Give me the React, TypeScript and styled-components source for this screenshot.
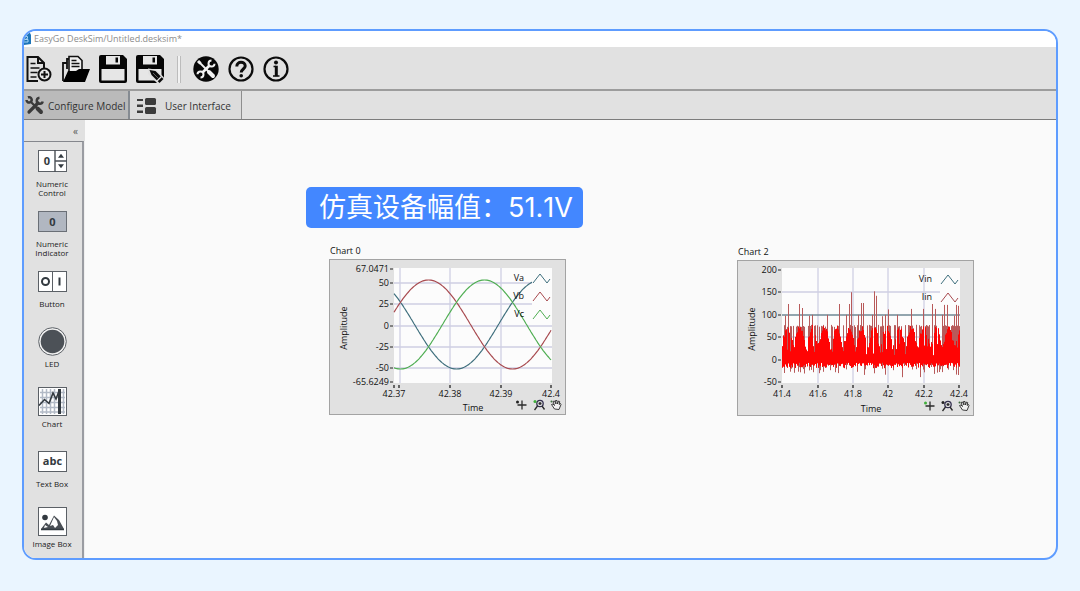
import React from "react";
import styled, { createGlobalStyle } from "styled-components";

const GlobalStyle = createGlobalStyle`
  * { box-sizing: border-box; }
  body { margin: 0; background: #eaf5ff; }
  button { font: inherit; color: inherit; border: 0; padding: 0; background: none; cursor: pointer; }
`;

const Page = styled.div`
  min-height: 100vh;
  padding: 29px 22px 31px;
  display: flex;
  font-family: "Open Sans", "Noto Sans CJK SC", sans-serif;
  color: #333;
`;

const Frame = styled.div`
  flex: 1;
  display: flex;
  flex-direction: column;
  overflow: hidden;
  border: 2px solid #5e9cff;
  border-radius: 14px;
  background: #fafafa;
`;

const TitleBar = styled.header`
  display: flex;
  align-items: center;
  gap: 3px;
  height: 16px;
  background: #fff;
  color: #8c8c8c;
  font-size: 9px;
  line-height: 14px;
`;

const Toolbar = styled.div`
  display: flex;
  align-items: center;
  gap: 9px;
  height: 42px;
  padding: 2px 1px 0;
  background: #e1e1e1;
`;

const ToolButton = styled.button<{ $round?: boolean }>`
  display: flex;
  width: ${(p) => (p.$round ? 26 : 28)}px;
  height: 28px;
  align-items: center;
`;

const Separator = styled.div`
  width: 4px;
  height: 27px;
  margin: 0 3px 0 4px;
  border: solid #bcbcbc;
  border-width: 0 1px;
  background: #f2f2f2;
`;

const TabBar = styled.div`
  display: flex;
  height: 31px;
  border-top: 2px solid #9c9c9c;
  border-bottom: 1px solid #7c7c7c;
  background: #e1e1e1;
`;

const Tab = styled.button<{ $active?: boolean }>`
  display: flex;
  align-items: center;
  gap: ${(p) => (p.$active ? 4 : 8)}px;
  width: ${(p) => (p.$active ? 106 : 112)}px;
  padding: 1px 0 0 ${(p) => (p.$active ? 1 : 7)}px;
  border-right: ${(p) => (p.$active ? "2px solid #858b92" : "1px solid #8e8e8e")};
  background: ${(p) => (p.$active ? "#bababa" : "#dcdcdc")};
  font-size: 10px;
  line-height: 14px;
  white-space: nowrap;
  svg { flex: none; }
`;

const Body = styled.div`
  flex: 1;
  display: flex;
`;

const Sidebar = styled.aside`
  width: 61px;
  display: flex;
  flex-direction: column;
  background: #efefef;
`;

const CollapseButton = styled.button`
  height: 21px;
  padding-right: 7px;
  background: #e1e1e1;
  color: #555;
  font-size: 10px;
  line-height: 20px;
  text-align: right;
`;

const Palette = styled.div`
  flex: 1;
  width: 60px;
  padding-top: 4px;
  border-top: 1px solid #85878d;
  border-right: 2px solid #9a9ca2;
  background: #e1e1e1;
`;

const PaletteItem = styled.button`
  display: flex;
  flex-direction: column;
  align-items: center;
  gap: 3px;
  width: 56px;
  height: 60px;
  color: #222;
  font-size: 8px;
  line-height: 9px;

  &:last-child { height: 51px; }
`;

const IconSlot = styled.span`
  display: flex;
  height: 30px;
  align-items: center;
`;

const Canvas = styled.main`
  position: relative;
  flex: 1;
`;

const Banner = styled.div`
  position: absolute;
  left: 221px;
  top: 67px;
  height: 41px;
  padding: 0 10px 0 13px;
  border-radius: 5px;
  background: #4387ff;
  color: #fff;
  font-family: Inter, "Noto Sans CJK SC", sans-serif;
  font-size: 27px;
  font-kerning: none;
  line-height: 41px;
  white-space: nowrap;
`;

const Widget = styled.section<{ $x: number; $y: number }>`
  position: absolute;
  left: ${(p) => p.$x}px;
  top: ${(p) => p.$y}px;
  width: 237px;
`;

const WidgetTitle = styled.h2`
  margin: 0 0 1px;
  padding-left: 1px;
  color: #111;
  font-size: 9px;
  font-weight: 400;
  line-height: 14px;
`;

const ChartPanel = styled.div`
  height: 156px;
  border: 1px solid #a3a3a3;
  background: #e1e1e1;
  svg { display: block; }
  text { font-size: 9px; fill: #111; }
`;

/* ---------- toolbar and tab icons ---------- */

const NewIcon = () => (
  <svg width="28" height="28" viewBox="0 0 28 28" fill="none" stroke="#111" strokeWidth="2">
    <path d="M13 26H2.500V2H13l6 6v5M13 2v6h6" />
    <path d="M5.500 8.500h5M5.500 13h9M5.500 17.500h7M5.500 22h6" strokeWidth="1.600" />
    <circle cx="19.500" cy="19.500" r="6" fill="#e8e8e8" />
    <path d="M19.500 16v7M16 19.500h7" />
  </svg>
);

const OpenIcon = () => (
  <svg width="28" height="28" viewBox="0 0 28 28" fill="none" stroke="#111" strokeWidth="1.600">
    <path d="M1 26V8h4M5 14V4h4" strokeWidth="1.800" />
    <path d="M7 16V1.500h9l4 4V14" fill="#efefef" />
    <path d="M9.500 5.500h5M9.500 8.500h8M9.500 11.500h8" />
    <path d="M1 27l5-11h8l3-2h11l-5 13z" fill="#000" stroke="none" />
  </svg>
);

const SaveIcon = ({ edit }: { edit?: boolean }) => (
  <svg width="28" height="28" viewBox="0 0 28 28">
    <path d="M2 0h22l4 4v22a2 2 0 0 1-2 2H2a2 2 0 0 1-2-2V2a2 2 0 0 1 2-2z" fill="#050505" />
    <path d="M7 1h14v8.500H7z" fill="#e6e6e6" />
    <path d="M16.500 2.500H19v5h-2.500z" fill="#050505" />
    <path d="M2.500 14h23v11.500h-23z" fill="#e6e6e6" />
    <path d="M2 12.500h24" stroke="#050505" strokeWidth="3" />
    {edit && (
      <g>
        <path d="M12 13.500l8 1 8 8V28h-7l-9-9z" fill="#e1e1e1" />
        <path d="M13.500 15l6 1 8 8-4 4-8-8z" fill="#0b0b0b" />
        <path d="M21 26l4.500-4.500" stroke="#e1e1e1" strokeWidth="1.200" />
        <path d="M17 18l6 6" stroke="#777" strokeWidth=".8" />
      </g>
    )}
  </svg>
);

const CrossedTools = ({ color }: { color: string }) => (
  <g fill="none" stroke={color}>
    <path d="M5.500 5.500L14 14" strokeWidth="2.200" />
    <path d="M12.500 12.500l3.500 3.500" strokeWidth="4" strokeLinecap="round" />
    <path d="M13 7L4 16" strokeWidth="3.200" strokeLinecap="round" />
    <path d="M14.500 1.800a3 3 0 1 0 3.200 3.700" strokeWidth="2.500" />
    <path d="M3 1.500a2.600 2.600 0 1 1-1.500 2.500" strokeWidth="2.500" />
  </g>
);

const SettingsIcon = () => (
  <svg width="26" height="26" viewBox="0 0 26 26">
    <circle cx="13" cy="13" r="12.700" fill="#080808" />
    <g fill="none" stroke="#f2f2f2">
      <path d="M16.500 9.500l-7 7" strokeWidth="2.600" />
      <path d="M18.500 4.500a3 3 0 1 0 3 3.200" strokeWidth="2" />
      <path d="M7.500 21.500a3 3 0 1 0-3-3.200" strokeWidth="2" />
      <path d="M6.500 6.500l10 10" strokeWidth="1.800" />
      <path d="M5 5l2.500 2.500" strokeWidth="3" />
      <path d="M16 16l4 4" strokeWidth="4" strokeLinecap="round" />
    </g>
  </svg>
);

const HelpIcon = () => (
  <svg width="26" height="26" viewBox="0 0 26 26" fill="none" stroke="#0c0c0c">
    <circle cx="13" cy="13" r="11.500" strokeWidth="2.200" />
    <path d="M8.800 10.500c0-5.700 8.400-5.200 8.400-.5 0 3-4 3-4 6.500" strokeWidth="3" />
    <circle cx="13.200" cy="19.800" r="1.800" fill="#0c0c0c" stroke="none" />
  </svg>
);

const InfoIcon = () => (
  <svg width="26" height="26" viewBox="0 0 26 26" fill="none" stroke="#0c0c0c">
    <circle cx="13" cy="13" r="11.500" strokeWidth="2.200" />
    <circle cx="13" cy="6.500" r="2" fill="#0c0c0c" stroke="none" />
    <path d="M10.500 10.500H13M10 20h6.500" strokeWidth="1.400" />
    <path d="M13.300 9.800v10.500" strokeWidth="3" />
  </svg>
);

const ModelIcon = () => (
  <svg width="19" height="19" viewBox="0 0 19 19">
    <CrossedTools color="#3a3a3a" />
  </svg>
);

const InterfaceIcon = () => (
  <svg width="20" height="16" viewBox="0 0 20 16" fill="#3c3c3c">
    <path d="M0 1h6v2H0zM0 6.500h6v2.500H0zM0 12.500h6V15H0z" />
    <rect x="8" y="0" width="11" height="7" rx="1.500" />
    <rect x="8" y="9" width="11" height="7" rx="1.500" />
  </svg>
);

const LogoIcon = () => (
  <svg width="7" height="12" viewBox="0 0 7 12">
    <path d="M0 0h6l1 2v9l-7 1z" fill="#1c74b8" />
    <path d="M0 3.500h3.500v2L1 6.500h3V9H0" fill="none" stroke="#a9d4f5" />
  </svg>
);

/* ---------- palette icons ---------- */

const box = { fill: "#fff", stroke: "#5b6066" };
const glyph = { fontSize: 11, fontWeight: 700, fill: "#333a40", textAnchor: "middle" as const };

const NumericControlIcon = () => (
  <svg width="29" height="22" viewBox="0 0 29 22">
    <rect x=".5" y=".5" width="28" height="21" {...box} />
    <path d="M17 0v22M17 11h12" stroke="#4a4f55" strokeWidth="1.400" />
    <path d="M20 7.800h6L23 3.800zM20 14.200h6l-3 4z" fill="#333a40" />
    <text x="9" y="15" {...glyph}>0</text>
  </svg>
);

const NumericIndicatorIcon = () => (
  <svg width="29" height="21" viewBox="0 0 29 21">
    <rect x=".5" y=".5" width="28" height="20" fill="#b1b7c1" stroke="#6a6f76" />
    <text x="14.500" y="14.500" {...glyph}>0</text>
  </svg>
);

const ButtonIcon = () => (
  <svg width="29" height="21" viewBox="0 0 29 21">
    <rect x=".5" y=".5" width="28" height="20" {...box} />
    <path d="M14.500 0v21" stroke="#5b6066" />
    <circle cx="7.500" cy="10.500" r="3.500" fill="none" stroke="#333a40" strokeWidth="2" />
    <path d="M21.500 6.500v8" stroke="#333a40" strokeWidth="2" />
  </svg>
);

const LedIcon = () => (
  <svg width="29" height="29" viewBox="0 0 29 29">
    <circle cx="14.500" cy="14.500" r="13.800" fill="#f4f4f4" stroke="#5b6066" />
    <circle cx="14.500" cy="14.500" r="11.800" fill="#4c5157" />
  </svg>
);

const ChartIcon = () => (
  <svg width="29" height="29" viewBox="0 0 29 29">
    <rect x=".5" y=".5" width="28" height="28" {...box} />
    <path
      d="M4.500 2v25M8.500 2v25M12.500 2v25M16.500 2v25M25.500 2v25M2 5.500h25M2 10.500h25M2 15.500h25M2 20.500h25M2 25h25"
      stroke="#b2bac6"
      strokeWidth="1.500"
    />
    <path d="M1 18.500l5.500-6 4.500 4 4-10.500 3 6 3-8" fill="none" stroke="#333a40" strokeWidth="1.600" />
    <path d="M21.500 2v25" stroke="#333a40" strokeWidth="3" />
  </svg>
);

const TextBoxIcon = () => (
  <svg width="29" height="21" viewBox="0 0 29 21">
    <rect x=".5" y=".5" width="28" height="20" {...box} />
    <text x="14.500" y="14" {...glyph}>abc</text>
  </svg>
);

const ImageBoxIcon = () => (
  <svg width="29" height="29" viewBox="0 0 29 29">
    <rect x=".5" y=".5" width="28" height="28" {...box} />
    <circle cx="7" cy="10.500" r="2.800" fill="#333a40" />
    <path d="M3 22l5-6.500 3 2.500 5-9.500 5 4.500 5 9z" fill="#4a4f55" />
    <path d="M16 10l-4 9 3-1 2 3 3-3-1-4zM7 18l-1 3 4-1z" fill="#fff" />
    <path d="M3 22.500h23" stroke="#333a40" strokeWidth="1.500" />
  </svg>
);

const paletteItems: { lines: string[]; Icon: React.FC }[] = [
  { lines: ["Numeric", "Control"], Icon: NumericControlIcon },
  { lines: ["Numeric", "Indicator"], Icon: NumericIndicatorIcon },
  { lines: ["Button"], Icon: ButtonIcon },
  { lines: ["LED"], Icon: LedIcon },
  { lines: ["Chart"], Icon: ChartIcon },
  { lines: ["Text Box"], Icon: TextBoxIcon },
  { lines: ["Image Box"], Icon: ImageBoxIcon },
];

/* ---------- charts ---------- */

type Tick = [position: number, label: string];

interface PlotProps {
  name: string;
  yTicks: Tick[];
  xTicks: Tick[];
  left: number;
  right: number;
  top: number;
  bottom: number;
  gridX: number[];
  gridY: number[];
  legend: [string, string][];
  legendTop: number;
  marks: [string, string];
  children: React.ReactNode;
}

const PlotTools = ({ marks }: { marks: [string, string] }) => (
  <g fill="none" stroke="#2b2b2b">
    <path d="M188.500 146h9M193 141.500v9" strokeWidth="1.300" />
    <circle cx="188.500" cy="143" r="1.500" fill={marks[0]} stroke="none" />
    <circle cx="211" cy="144.500" r="3.200" stroke="#34304f" strokeWidth="1.300" />
    <path d="M208.500 147l-3 4M213 147l2.500 3.500M209.500 144.500h3M211 143v3" strokeWidth="1.300" />
    <circle cx="206" cy="142.500" r="1.500" fill={marks[1]} stroke="none" />
    <path
      d="M225.500 150l-3-4.500 1.500-.5 1.500 1.500-1.500-4 1.500-.5 1.500 3-.5-3.500h1.500l.5 3.500 1-3 1.200.5-.5 3 1.300-1 .5 1-2 5z"
      fill="#f2f2f2"
      strokeWidth=".9"
    />
    <circle cx="222.500" cy="142.500" r="1" fill="#3d6b3d" stroke="none" />
  </g>
);

const Plot = (p: PlotProps) => (
  <svg width="235" height="154" viewBox="1 1 235 154" role="img" aria-label={p.name}>
    <rect x={p.left} y={p.top} width={p.right - p.left} height={p.bottom - p.top} fill="#fcfcfc" />
    <g stroke="#cfcfe3" strokeWidth="1.300">
      {p.gridX.map((x) => <path key={x} d={`M${x} ${p.top}V${p.bottom}`} />)}
      {p.gridY.map((y) => <path key={y} d={`M${p.left} ${y}H${p.right}`} />)}
    </g>
    {p.children}
    <rect x={p.right - 20} y={p.legendTop} width="20" height={p.legend.length * 18 - 2} fill="#fcfcfc" />
    {p.legend.map(([label, color], i) => {
      const y = p.legendTop + i * 18 + 9;
      return (
        <g key={label}>
          <text x={p.right - 28} y={y + 3} textAnchor="end">{label}</text>
          <path d={`M${p.right - 19} ${y + 5}l7-9 7 9 3-4`} fill="none" stroke={color} />
        </g>
      );
    })}
    <g stroke="#222">
      {p.yTicks.map(([y]) => <path key={y} d={`M${p.left - 4} ${y}h3`} />)}
      {p.xTicks.map(([x]) => <path key={x} d={`M${x} ${p.bottom + 2}v3`} strokeWidth="1.300" />)}
    </g>
    {p.yTicks.map(([y, label]) => (
      <text key={label} x={p.left - 5} y={y + 3} textAnchor="end">{label}</text>
    ))}
    {p.xTicks.map(([x, label]) => (
      <text key={x} x={x} y={p.bottom + 14} textAnchor="middle">{label}</text>
    ))}
    <text x={(p.left + p.right) / 2} y="152" textAnchor="middle">Time</text>
    <text transform="translate(18 69) rotate(-90)" textAnchor="middle">Amplitude</text>
    <PlotTools marks={p.marks} />
  </svg>
);

const sine = (peak: number) => {
  const points: string[] = [];
  for (let x = 65; x <= 222; x += 1) {
    points.push(`${x},${(65.5 - 44.5 * Math.cos(((x - peak) * 2 * Math.PI) / 168)).toFixed(1)}`);
  }
  return points.join(" ");
};

const Chart0 = () => (
  <Plot
    name="Chart 0"
    left={65} right={223} top={9} bottom={124}
    yTicks={[[10, "67.0471"], [24, "50"], [45, "25"], [67, "0"], [88, "-25"], [109, "-50"], [123, "-65.6249"]]}
    xTicks={[[65, "42.37"], [70, ""], [121, "42.38"], [172, "42.39"], [222, "42.4"]]}
    gridX={[71, 121, 172]}
    gridY={[24, 45, 67, 88, 109]}
    legend={[["Va", "#3f6f7d"], ["Vb", "#a84a4f"], ["Vc", "#4fae52"]]}
    legendTop={10}
    marks={["#222", "#3fae3a"]}
  >
    <g fill="none" strokeWidth="1.200">
      <polyline points={sine(211.5)} stroke="#3f6f7d" />
      <polyline points={sine(99.5)} stroke="#a84a4f" />
      <polyline points={sine(155.5)} stroke="#4fae52" />
    </g>
  </Plot>
);

/* Current spikes: offset from the left edge of the plot, and peak value */
const spikes: [number, number][] = [
  [3, 98], [6, 124], [17, 124], [20, 115], [27, 98], [30, 100], [45, 100], [57, 124], [64, 100], [67, 124],
  [69, 150], [76, 100], [79, 126], [81, 126], [90, 100], [92, 152], [94, 142], [100, 97], [103, 100], [106, 112],
  [115, 100], [129, 113], [141, 113], [150, 124], [153, 113], [160, 100], [162, 122], [165, 122], [172, 98], [174, 122], [176, 120],
];

const noise = (i: number) => {
  const v = Math.sin(i * 12.9898) * 43758.5453;
  return v - Math.floor(v);
};

const toY = (value: number) => 100 - value * 0.452;

const buildBars = () => {
  let dark = "";
  let red = "";
  for (let i = 0; i < 178; i += 1) {
    const wave = Math.abs(Math.cos(((i - 5) * Math.PI) / 12.4));
    const bright = noise(i + 5) > 0.87 ? 10 + noise(i) * 28 : 16 + wave * 48 + noise(i) * 14;
    const spike = spikes.find(([at]) => at === i);
    const tall = spike ? spike[1] : noise(i + 300) > 0.6 ? 73 + noise(i + 60) * 5 : bright;
    const low = -6 - noise(i + 700) * 12;
    const deep = noise(i + 900) > 0.75 ? low - 6 - noise(i + 40) * 16 : low;
    const x = 45.5 + i;
    dark += `M${x} ${toY(tall).toFixed(1)}V${toY(deep).toFixed(1)}`;
    red += `M${x} ${toY(bright).toFixed(1)}V${toY(low).toFixed(1)}`;
  }
  return { dark, red };
};

const bars = buildBars();

const Chart2 = () => (
  <Plot
    name="Chart 2"
    left={45} right={223} top={8} bottom={123}
    yTicks={[[10, "200"], [32, "150"], [55, "100"], [77, "50"], [100, "0"], [122, "-50"]]}
    xTicks={[[45, "41.4"], [81, "41.6"], [116, "41.8"], [151, "42"], [187, "42.2"], [222, "42.4"]]}
    gridX={[81, 116, 151, 187]}
    gridY={[32, 77, 100]}
    legend={[["Vin", "#3f6f7d"], ["Iin", "#a84a4f"]]}
    legendTop={10}
    marks={["#3fae3a", "#222"]}
  >
    <path d="M45 55H223" stroke="#6f8894" strokeWidth="1.500" />
    <path d={bars.dark} stroke="#b85a5a" />
    <path d={bars.red} stroke="#ff0404" />
  </Plot>
);

export default function App() {
  return (
    <Page>
      <GlobalStyle />
      <Frame>
        <TitleBar>
          <LogoIcon />
          EasyGo DeskSim/Untitled.desksim*
        </TitleBar>
        <Toolbar role="toolbar" aria-label="Main">
          <ToolButton aria-label="New"><NewIcon /></ToolButton>
          <ToolButton aria-label="Open"><OpenIcon /></ToolButton>
          <ToolButton aria-label="Save"><SaveIcon /></ToolButton>
          <ToolButton aria-label="Save as"><SaveIcon edit /></ToolButton>
          <Separator />
          <ToolButton $round aria-label="Settings"><SettingsIcon /></ToolButton>
          <ToolButton $round aria-label="Help"><HelpIcon /></ToolButton>
          <ToolButton $round aria-label="About"><InfoIcon /></ToolButton>
        </Toolbar>
        <TabBar role="tablist">
          <Tab $active role="tab" aria-selected="true"><ModelIcon />Configure Model</Tab>
          <Tab role="tab" aria-selected="false"><InterfaceIcon />User Interface</Tab>
        </TabBar>
        <Body>
          <Sidebar>
            <CollapseButton aria-label="Collapse palette">«</CollapseButton>
            <Palette>
              {paletteItems.map(({ lines, Icon }) => (
                <PaletteItem key={lines.join(" ")}>
                  <IconSlot><Icon /></IconSlot>
                  <span>
                    {lines.map((line, i) => (
                      <React.Fragment key={line}>
                        {i > 0 && <br />}
                        {line}
                      </React.Fragment>
                    ))}
                  </span>
                </PaletteItem>
              ))}
            </Palette>
          </Sidebar>
          <Canvas>
            <Banner>仿真设备幅值：51.1V</Banner>
            <Widget $x={244} $y={124}>
              <WidgetTitle>Chart 0</WidgetTitle>
              <ChartPanel><Chart0 /></ChartPanel>
            </Widget>
            <Widget $x={652} $y={125}>
              <WidgetTitle>Chart 2</WidgetTitle>
              <ChartPanel><Chart2 /></ChartPanel>
            </Widget>
          </Canvas>
        </Body>
      </Frame>
    </Page>
  );
}
